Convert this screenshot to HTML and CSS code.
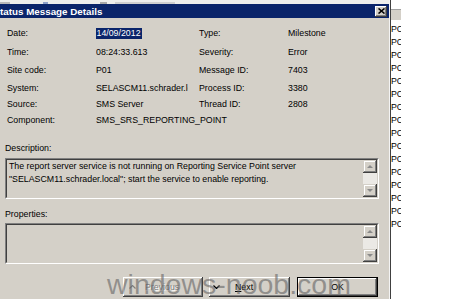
FILE: index.html
```html
<!DOCTYPE html>
<html lang="en">
<head>
  <meta charset="UTF-8" />
  <title>Status Message Details</title>
  <link rel="stylesheet" href="styles.css">
</head>
<body>
  <div class="screen">
    <div class="dialog">
      <div class="frame">
        <div class="behind">
          <span class="ghost g1"></span>
          <span class="ghost g2"></span>
          <span class="ghost g3"></span>
          <span class="ghost g4"></span>
        </div>
        <div class="titlebar">
          <span class="title">Status Message Details</span>
          <span class="close">
            <svg width="7" height="6" viewBox="0 0 7 6">
              <path d="M0.5 0.5 L6.5 5.5 M6.5 0.5 L0.5 5.5" stroke="#000" stroke-width="1.6" fill="none" />
            </svg>
          </span>
        </div>

        <div class="client">
          <div class="fields">
            <span class="label">Date:</span>
            <span class="value"><span class="sel">14/09/2012</span></span>
            <span class="label">Type:</span>
            <span class="value">Milestone</span>

            <span class="label">Time:</span>
            <span class="value">08:24:33.613</span>
            <span class="label">Severity:</span>
            <span class="value">Error</span>

            <span class="label">Site code:</span>
            <span class="value">P01</span>
            <span class="label">Message ID:</span>
            <span class="value">7403</span>

            <span class="label">System:</span>
            <span class="value clip">SELASCM11.schrader.local</span>
            <span class="label">Process ID:</span>
            <span class="value">3380</span>

            <span class="label">Source:</span>
            <span class="value">SMS Server</span>
            <span class="label">Thread ID:</span>
            <span class="value">2808</span>

            <span class="label">Component:</span>
            <span class="value wide">SMS_SRS_REPORTING_POINT</span>
          </div>

          <div class="caption desc-caption">Description:</div>
          <div class="textbox">
            <div class="inner">
              <div class="text">The report server service is not running on Reporting Service Point server<br>"SELASCM11.schrader.local"; start the service to enable reporting.</div>
              <div class="scrollbar">
                <span class="sbtn"><span class="arrow up"></span></span>
                <span class="track"></span>
                <span class="sbtn"><span class="arrow down"></span></span>
              </div>
            </div>
          </div>

          <div class="caption props-caption">Properties:</div>
          <div class="textbox props">
            <div class="inner">
              <div class="text"></div>
              <div class="scrollbar">
                <span class="sbtn"><span class="arrow up"></span></span>
                <span class="track"></span>
                <span class="sbtn"><span class="arrow down"></span></span>
              </div>
            </div>
          </div>

          <div class="buttons">
            <div class="btn prev">
              <svg class="chev" width="7" height="4" viewBox="0 0 7 4">
                <path d="M0.5 3.5 L3.5 0.5 L6.5 3.5" stroke="#808080" stroke-width="1.2" fill="none" />
              </svg>
              <span>Previous</span>
            </div>
            <div class="btn next">
              <svg class="chev" width="7" height="4" viewBox="0 0 7 4">
                <path d="M0.5 0.5 L3.5 3.5 L6.5 0.5" stroke="#000" stroke-width="1.2" fill="none" />
              </svg>
              <span><u>N</u>ext</span>
            </div>
            <div class="btn ok">OK</div>
          </div>

          <div class="watermark">windows-noob.com</div>
        </div>
      </div>
    </div>

    <div class="list">
      <div class="list-head"></div>
      <div class="rows">
        <div class="row">PC</div>
        <div class="row">PC</div>
        <div class="row">PC</div>
        <div class="row">PC</div>
        <div class="row">PC</div>
        <div class="row">PC</div>
        <div class="row">PC</div>
        <div class="row">PC</div>
        <div class="row">PC</div>
        <div class="row">PC</div>
        <div class="row">PC</div>
        <div class="row">PC</div>
        <div class="row">PC</div>
        <div class="row">PC</div>
        <div class="row">PC</div>
        <div class="row">PC</div>
      </div>
    </div>
    <div class="rest"></div>
  </div>
</body>
</html>
```

FILE: styles.css
```css
body {
  margin: 0;
  width: 452px;
  height: 299px;
  overflow: hidden;
  background: #fff;
  font-family: "Liberation Sans", Arial, sans-serif;
  font-size: 8.8px;
  color: #000;
}
.screen {
  display: flex;
  height: 299px;
}

/* dialog window */
.dialog {
  width: 391px;
  flex: none;
  box-sizing: border-box;
  border-right: 1px solid #404040;
}
.frame {
  height: 299px;
  border-right: 1px solid #f4f4f4;
}
.behind {
  height: 4px;
  background: #eeeeec;
  display: flex;
  align-items: flex-end;
  overflow: hidden;
}
.ghost { display: block; height: 2px; background: #b8b8b8; }
.g1 { width: 10px; margin-left: 0; }
.g2 { width: 5px; margin-left: 33px; background: #8da0c8; }
.g3 { width: 7px; margin-left: 52px; background: #a8a8a8; }
.g4 { width: 60px; margin-left: 8px; background: #cfcfcf; }

.titlebar {
  height: 14px;
  background: #0a246a;
  display: flex;
  align-items: center;
  overflow: hidden;
}
.title {
  flex: 1;
  color: #fff;
  font-weight: bold;
  font-size: 9.8px;
  margin-left: -6.5px;
  white-space: nowrap;
}
.close {
  width: 12px;
  height: 11px;
  margin-right: 2px;
  background: #d4d0c8;
  box-shadow: inset -1px -1px #404040, inset 1px 1px #fff, inset -2px -2px #808080;
  display: flex;
  align-items: center;
  justify-content: center;
}

.client {
  position: relative;
  height: 281px;
  box-sizing: border-box;
  padding: 6px 10px 0 5px;
  background: #d4d0c8;
}

.fields {
  display: grid;
  grid-template-columns: 89px 103px 89px 1fr;
  grid-template-rows: 18px 19px 18px 17px 16px 16px;
  align-items: center;
  padding-left: 2px;
}
.value {
  white-space: nowrap;
  overflow: hidden;
}
.value.clip { width: 92px; }
.value.wide { grid-column: 2 / span 3; }
.sel {
  display: inline-block;
  line-height: 11px;
  padding: 0 1.5px;
  margin-left: -1px;
  background: #0a246a;
  color: #fff;
}

.caption { line-height: 12px; }
.desc-caption { margin-top: 14px; }
.props-caption { margin-top: 9px; }

.textbox {
  height: 41px;
  margin-top: 4px;
  box-sizing: border-box;
  border: 1px solid;
  border-color: #808080 #fff #fff #808080;
}
.textbox.props { margin-top: 3px; }
.inner {
  height: 100%;
  box-sizing: border-box;
  border: 1px solid;
  border-color: #404040 #d4d0c8 #d4d0c8 #404040;
  display: flex;
}
.text {
  flex: 1;
  padding: 0 2px;
  line-height: 12.5px;
  white-space: nowrap;
  overflow: hidden;
}
.scrollbar {
  width: 14px;
  display: flex;
  flex-direction: column;
}
.sbtn {
  height: 13px;
  flex: none;
  background: #d4d0c8;
  box-shadow: inset -1px -1px #404040, inset 1px 1px #d4d0c8, inset -2px -2px #808080, inset 2px 2px #fff;
  display: flex;
  align-items: center;
  justify-content: center;
}
.track {
  flex: 1;
  background: #ebe9e5;
}
.arrow {
  width: 0;
  height: 0;
  border-left: 3px solid transparent;
  border-right: 3px solid transparent;
}
.arrow.up { border-bottom: 3px solid #8a8a8a; }
.arrow.down { border-top: 3px solid #8a8a8a; }

/* bottom buttons */
.buttons {
  display: flex;
  justify-content: flex-end;
  margin-top: 13px;
  margin-right: 1px;
}
.btn {
  height: 20px;
  width: 81px;
  box-sizing: border-box;
  background: #d4d0c8;
  box-shadow: inset -1px -1px #404040, inset 1px 1px #fff, inset -2px -2px #808080;
  display: flex;
  align-items: center;
}
.btn.prev {
  width: 80px;
  padding-left: 6px;
  gap: 9px;
  color: #808080;
  text-shadow: 1px 1px #fff;
}
.btn.next {
  margin-left: 6px;
  padding-left: 4px;
  gap: 15px;
}
.btn.ok {
  margin-left: 7px;
  justify-content: center;
  box-shadow: inset 0 0 0 1px #000, inset -2px -2px #404040, inset 2px 2px #fff, inset -3px -3px #808080;
}
.chev { flex: none; }

.watermark {
  position: absolute;
  left: 107px;
  top: 252px;
  font-size: 28.5px;
  line-height: 28.5px;
  color: rgba(100, 100, 100, 0.6);
  white-space: nowrap;
  pointer-events: none;
}

/* list view behind the dialog */
.list {
  width: 10px;
  flex: none;
  overflow: hidden;
  background: #fff;
}
.list-head {
  margin-top: 9px;
  height: 11px;
  box-sizing: border-box;
  background: #d4d0c8;
  border-top: 1px solid #a0a0a0;
}
.rows { padding-top: 3px; }
.row {
  line-height: 13px;
  white-space: nowrap;
}
.rest {
  flex: 1;
  background: #fff;
}
```
